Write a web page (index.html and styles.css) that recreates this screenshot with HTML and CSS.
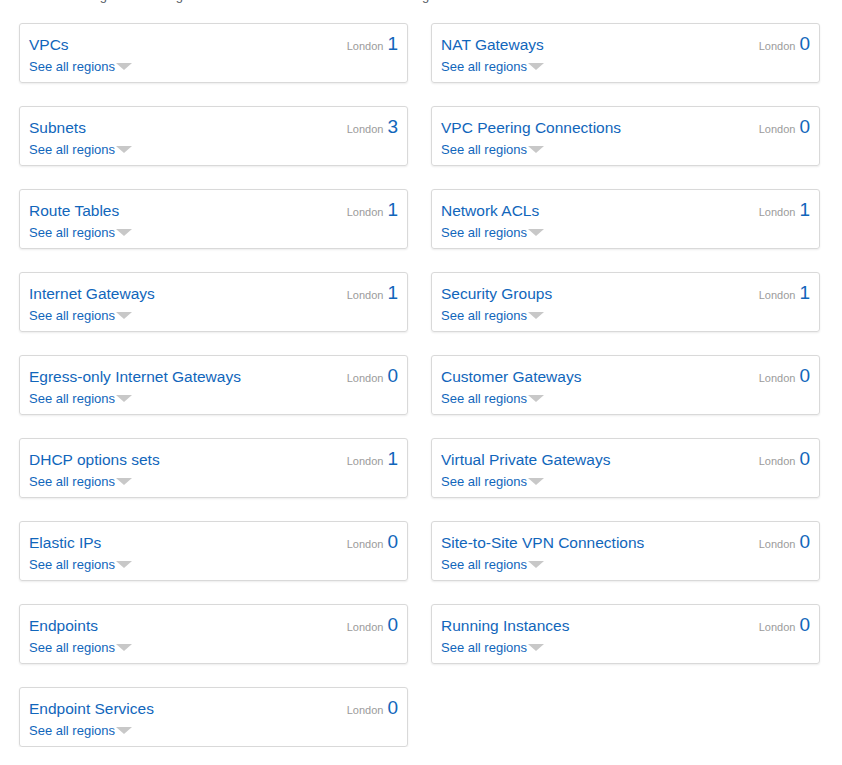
FILE: index.html
```html
<!DOCTYPE html>
<html>
<head>
<meta charset="utf-8">
<link rel="stylesheet" href="styles.css">
</head>
<body>
<p class="intro">You are using the following Amazon VPC resources in the London region:</p>
<div class="grid">
  <div class="card"><div class="head"><a class="title">VPCs</a><span class="meta"><span class="region">London</span><span class="count">1</span></span></div><a class="all">See all regions<span class="caret"></span></a></div>
  <div class="card"><div class="head"><a class="title">NAT Gateways</a><span class="meta"><span class="region">London</span><span class="count">0</span></span></div><a class="all">See all regions<span class="caret"></span></a></div>
  <div class="card"><div class="head"><a class="title">Subnets</a><span class="meta"><span class="region">London</span><span class="count">3</span></span></div><a class="all">See all regions<span class="caret"></span></a></div>
  <div class="card"><div class="head"><a class="title">VPC Peering Connections</a><span class="meta"><span class="region">London</span><span class="count">0</span></span></div><a class="all">See all regions<span class="caret"></span></a></div>
  <div class="card"><div class="head"><a class="title">Route Tables</a><span class="meta"><span class="region">London</span><span class="count">1</span></span></div><a class="all">See all regions<span class="caret"></span></a></div>
  <div class="card"><div class="head"><a class="title">Network ACLs</a><span class="meta"><span class="region">London</span><span class="count">1</span></span></div><a class="all">See all regions<span class="caret"></span></a></div>
  <div class="card"><div class="head"><a class="title">Internet Gateways</a><span class="meta"><span class="region">London</span><span class="count">1</span></span></div><a class="all">See all regions<span class="caret"></span></a></div>
  <div class="card"><div class="head"><a class="title">Security Groups</a><span class="meta"><span class="region">London</span><span class="count">1</span></span></div><a class="all">See all regions<span class="caret"></span></a></div>
  <div class="card"><div class="head"><a class="title">Egress-only Internet Gateways</a><span class="meta"><span class="region">London</span><span class="count">0</span></span></div><a class="all">See all regions<span class="caret"></span></a></div>
  <div class="card"><div class="head"><a class="title">Customer Gateways</a><span class="meta"><span class="region">London</span><span class="count">0</span></span></div><a class="all">See all regions<span class="caret"></span></a></div>
  <div class="card"><div class="head"><a class="title">DHCP options sets</a><span class="meta"><span class="region">London</span><span class="count">1</span></span></div><a class="all">See all regions<span class="caret"></span></a></div>
  <div class="card"><div class="head"><a class="title">Virtual Private Gateways</a><span class="meta"><span class="region">London</span><span class="count">0</span></span></div><a class="all">See all regions<span class="caret"></span></a></div>
  <div class="card"><div class="head"><a class="title">Elastic IPs</a><span class="meta"><span class="region">London</span><span class="count">0</span></span></div><a class="all">See all regions<span class="caret"></span></a></div>
  <div class="card"><div class="head"><a class="title">Site-to-Site VPN Connections</a><span class="meta"><span class="region">London</span><span class="count">0</span></span></div><a class="all">See all regions<span class="caret"></span></a></div>
  <div class="card"><div class="head"><a class="title">Endpoints</a><span class="meta"><span class="region">London</span><span class="count">0</span></span></div><a class="all">See all regions<span class="caret"></span></a></div>
  <div class="card"><div class="head"><a class="title">Running Instances</a><span class="meta"><span class="region">London</span><span class="count">0</span></span></div><a class="all">See all regions<span class="caret"></span></a></div>
  <div class="card"><div class="head"><a class="title">Endpoint Services</a><span class="meta"><span class="region">London</span><span class="count">0</span></span></div><a class="all">See all regions<span class="caret"></span></a></div>
</div>
</body>
</html>
```
FILE: styles.css
```css
html, body {
  margin: 0;
  padding: 0;
  background: #ffffff;
}
body {
  font-family: "Liberation Sans", Arial, sans-serif;
  padding: 0 0 0 19px;
  overflow: hidden;
}
.intro {
  margin: -12px 0 0 9px;
  font-size: 13px;
  line-height: 16px;
  color: #545b64;
}
.grid {
  margin-top: 19px;
  display: grid;
  grid-template-columns: 389px 389px;
  column-gap: 23px;
  row-gap: 23px;
}
.card {
  box-sizing: border-box;
  height: 60px;
  border: 1px solid #d9d9d9;
  border-radius: 3px;
  box-shadow: 0 1px 2px rgba(0, 0, 0, 0.08);
  padding: 10px 9px 6px 9px;
  display: flex;
  flex-direction: column;
}
.head {
  display: flex;
  justify-content: space-between;
  align-items: baseline;
  height: 20px;
}
.title {
  font-size: 15.5px;
  line-height: 20px;
  color: #1166bb;
}
.meta {
  display: flex;
  align-items: baseline;
  gap: 4px;
}
.region {
  font-size: 11px;
  color: #9b9b9b;
}
.count {
  font-size: 19px;
  line-height: 20px;
  color: #1166bb;
}
.all {
  margin-top: 4px;
  font-size: 13px;
  line-height: 18px;
  color: #1166bb;
}
.caret {
  display: inline-block;
  width: 0;
  height: 0;
  margin-left: 1px;
  border-left: 8px solid transparent;
  border-right: 8px solid transparent;
  border-top: 7px solid #c8c8c8;
  vertical-align: 1px;
}
```
